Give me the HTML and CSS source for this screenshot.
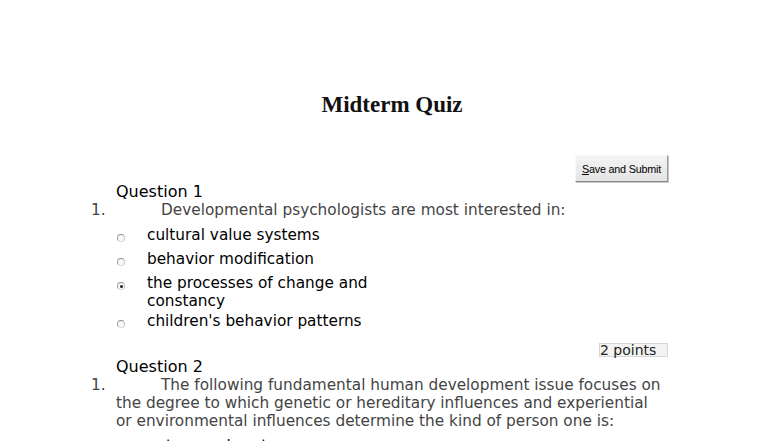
FILE: index.html
```html
<!DOCTYPE html>
<html>
<head>
<meta charset="utf-8">
<link rel="stylesheet" href="styles.css">
</head>
<body>
<div class="page">
  <h1 class="title">Midterm Quiz</h1>
  <div class="actions">
    <button class="btn"><u>S</u>ave and Submit</button>
  </div>

  <div class="question">
    <div class="q-head">Question 1</div>
    <p class="q-text"><span class="num">1.</span>Developmental psychologists are most interested in:</p>
    <div class="options">
      <div class="opt"><span class="radio"></span><span class="label">cultural value systems</span></div>
      <div class="opt"><span class="radio"></span><span class="label">behavior modification</span></div>
      <div class="opt"><span class="radio checked"></span><span class="label">the processes of change and constancy</span></div>
      <div class="opt"><span class="radio"></span><span class="label">children's behavior patterns</span></div>
    </div>
  </div>

  <div class="points-row"><span class="points">2 points</span></div>

  <div class="question">
    <div class="q-head">Question 2</div>
    <p class="q-text"><span class="num">1.</span>The following fundamental human development issue focuses on the degree to which genetic or hereditary influences and experiential or environmental influences determine the kind of person one is:</p>
    <div class="options">
      <div class="opt"><span class="radio"></span><span class="label">nature and nurture</span></div>
      <div class="opt"><span class="radio"></span><span class="label">continuity and discontinuity</span></div>
    </div>
  </div>
</div>
</body>
</html>
```
FILE: styles.css
```css
html, body {
  margin: 0;
  padding: 0;
  background: #ffffff;
}
body {
  font-family: "DejaVu Sans", sans-serif;
  font-size: 15.3px;
  line-height: 18px;
  color: #000;
}
.page {
  width: 552px;
  margin: 0 auto;
  padding-top: 91px;
}
.title {
  margin: 0;
  font-family: "Liberation Serif", "Times New Roman", serif;
  font-weight: bold;
  font-size: 23px;
  line-height: 28px;
  text-align: center;
  color: #111;
}
.actions {
  display: flex;
  justify-content: flex-end;
  margin-top: 36px;
}
.btn {
  width: 93px;
  height: 27px;
  padding: 0;
  font-family: "Liberation Sans", Arial, sans-serif;
  font-size: 10.8px;
  color: #000;
  background: linear-gradient(#f4f4f4, #e4e4e4);
  border: 1px solid;
  border-color: #f8f8f8 #9a9a9a #8a8a8a #f8f8f8;
  box-shadow: 1px 1px 0 #c8c8c8;
  letter-spacing: -0.2px;
}
.btn u { text-decoration: underline; }
.q-head {
  margin-top: 1px;
  font-size: 16px;
  color: #000;
}
.q-text {
  margin: 0;
  color: #444;
}
.num {
  display: inline-block;
  margin-left: -25px;
  width: 70px;
  color: #444;
}
.options {
  margin-top: 7px;
}
.opt {
  display: flex;
  align-items: flex-start;
  min-height: 24px;
  padding-bottom: 2px;
  box-sizing: border-box;
}
.radio {
  flex: none;
  width: 8px;
  height: 8px;
  margin: 8px 22px 0 1px;
  border-radius: 50%;
  border: 1px solid;
  border-color: #8f8f8f #c4c4c4 #d8d8d8 #9f9f9f;
  background: #fafafa;
  box-sizing: border-box;
  position: relative;
}
.radio.checked::after {
  content: "";
  position: absolute;
  left: 1.5px;
  top: 1.5px;
  width: 3px;
  height: 3px;
  border-radius: 50%;
  background: #222;
}
.label {
  width: 235px;
}
.points-row {
  display: flex;
  justify-content: flex-end;
  margin-top: 7px;
}
.points {
  width: 69px;
  height: 14px;
  box-sizing: border-box;
  border: 1px solid #d6d6d6;
  background: #f3f3f3;
  font-size: 14px;
  line-height: 12px;
  color: #222;
  padding-left: 0;
}
```
